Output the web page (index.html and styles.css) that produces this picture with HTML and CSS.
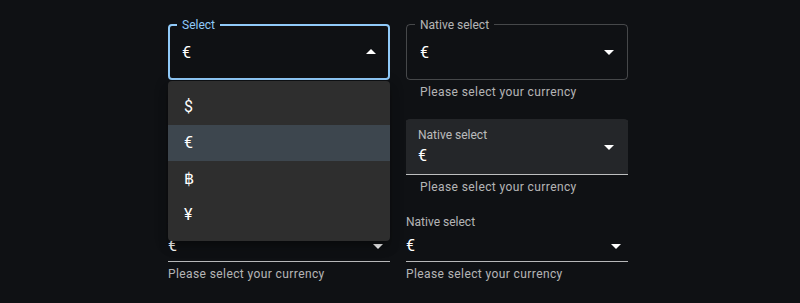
FILE: index.html
```html
<!DOCTYPE html>
<html lang="en">
<head>
    <meta charset="UTF-8">
    <meta name="viewport" content="width=device-width, initial-scale=1.0">
    <title>Select currency</title>
    <link rel="stylesheet" href="styles.css">
</head>
<body>
    <div class="demo">
        <div class="row">
            <div class="field">
                <div class="outlined focused">
                    <label class="float-label">Select</label>
                    <div class="value">€</div>
                    <svg class="arrow open" viewBox="0 0 24 24"><path d="M7 10l5 5 5-5z"/></svg>
                    <fieldset><legend><span>Select</span></legend></fieldset>
                    <ul class="menu">
                        <li class="menu-item">$</li>
                        <li class="menu-item selected">€</li>
                        <li class="menu-item">฿</li>
                        <li class="menu-item">¥</li>
                    </ul>
                </div>
                <p class="helper">Please select your currency</p>
            </div>
            <div class="field">
                <div class="outlined">
                    <label class="float-label">Native select</label>
                    <div class="value">€</div>
                    <svg class="arrow" viewBox="0 0 24 24"><path d="M7 10l5 5 5-5z"/></svg>
                    <fieldset><legend><span>Native select</span></legend></fieldset>
                </div>
                <p class="helper">Please select your currency</p>
            </div>
        </div>

        <div class="row">
            <div class="field">
                <div class="filled">
                    <label class="float-label">Select</label>
                    <div class="value">€</div>
                    <svg class="arrow" viewBox="0 0 24 24"><path d="M7 10l5 5 5-5z"/></svg>
                </div>
                <p class="helper">Please select your currency</p>
            </div>
            <div class="field">
                <div class="filled">
                    <label class="float-label">Native select</label>
                    <div class="value">€</div>
                    <svg class="arrow" viewBox="0 0 24 24"><path d="M7 10l5 5 5-5z"/></svg>
                </div>
                <p class="helper">Please select your currency</p>
            </div>
        </div>

        <div class="row">
            <div class="field">
                <label class="std-label">Select</label>
                <div class="standard">
                    <div class="value">€</div>
                    <svg class="arrow" viewBox="0 0 24 24"><path d="M7 10l5 5 5-5z"/></svg>
                </div>
                <p class="helper plain">Please select your currency</p>
            </div>
            <div class="field">
                <label class="std-label">Native select</label>
                <div class="standard">
                    <div class="value">€</div>
                    <svg class="arrow" viewBox="0 0 24 24"><path d="M7 10l5 5 5-5z"/></svg>
                </div>
                <p class="helper plain">Please select your currency</p>
            </div>
        </div>
    </div>
</body>
</html>
```

FILE: styles.css
```css
body {
    margin: 0;
    background-color: #0f1114;
    color: #fff;
    font-family: Roboto, "Noto Sans", sans-serif;
    height: 100vh;
    overflow: hidden;
}
.demo {
    padding: 16px 0 0 160px;
}
.row {
    display: flex;
}
.field {
    width: 222px;
    margin: 8px;
}
.value {
    font-size: 16px;
    line-height: 23px;
    letter-spacing: 0.00938em;
}
.arrow {
    position: absolute;
    right: 7px;
    top: calc(50% - 12px);
    width: 24px;
    height: 24px;
    fill: #fff;
}
.arrow.open {
    transform: rotate(180deg);
}
.float-label {
    position: absolute;
    left: 14px;
    top: -7px;
    font-size: 12px;
    line-height: 17px;
    color: rgba(255,255,255,.7);
    white-space: nowrap;
}

/* outlined */
.outlined {
    position: relative;
    height: 56px;
    box-sizing: border-box;
    padding: 16.5px 14px;
}
.outlined fieldset {
    position: absolute;
    top: -5px;
    left: 0;
    right: 0;
    bottom: 0;
    margin: 0;
    padding: 0 8px;
    border: 1px solid rgba(255,255,255,.23);
    border-radius: 4px;
    pointer-events: none;
}
.outlined legend {
    padding: 0;
    height: 11px;
    font-size: 12px;
    visibility: hidden;
    white-space: nowrap;
}
.outlined legend span {
    display: inline-block;
    padding: 0 5px;
}
.outlined.focused fieldset {
    border: 2px solid #90caf9;
    padding: 0 7px;
}
.outlined.focused .float-label {
    color: #90caf9;
}

/* filled */
.filled {
    position: relative;
    height: 56px;
    box-sizing: border-box;
    padding: 25px 12px 8px;
    background: rgba(255,255,255,.09);
    border-radius: 4px 4px 0 0;
    box-shadow: inset 0 -1px 0 rgba(255,255,255,.7);
}
.filled .float-label {
    left: 12px;
    top: 8px;
}

/* standard */
.std-label {
    display: block;
    height: 16px;
    font-size: 12px;
    line-height: 17px;
    color: rgba(255,255,255,.7);
}
.standard {
    position: relative;
    height: 32px;
    box-sizing: border-box;
    padding: 4px 0 5px;
    box-shadow: inset 0 -1px 0 rgba(255,255,255,.7);
}
.standard .arrow {
    right: 0;
}

.helper {
    margin: 3px 14px 0;
    font-size: 12px;
    line-height: 1.66;
    letter-spacing: 0.03333em;
    color: rgba(255,255,255,.7);
}
.helper.plain {
    margin-left: 0;
    margin-right: 0;
}

/* open menu */
.menu {
    position: absolute;
    top: calc(100% + 1px);
    left: 0;
    right: 0;
    z-index: 10;
    margin: 0;
    padding: 8px 0;
    list-style: none;
    background-color: #2e2e2e;
    border-radius: 4px;
    box-shadow: 0 5px 5px -3px rgba(0,0,0,.2), 0 8px 10px 1px rgba(0,0,0,.14), 0 3px 14px 2px rgba(0,0,0,.12);
}
.menu-item {
    padding: 6px 16px;
    font-size: 16px;
    line-height: 24px;
    letter-spacing: 0.00938em;
}
.menu-item.selected {
    background-color: rgba(144,202,249,.16);
}
```
